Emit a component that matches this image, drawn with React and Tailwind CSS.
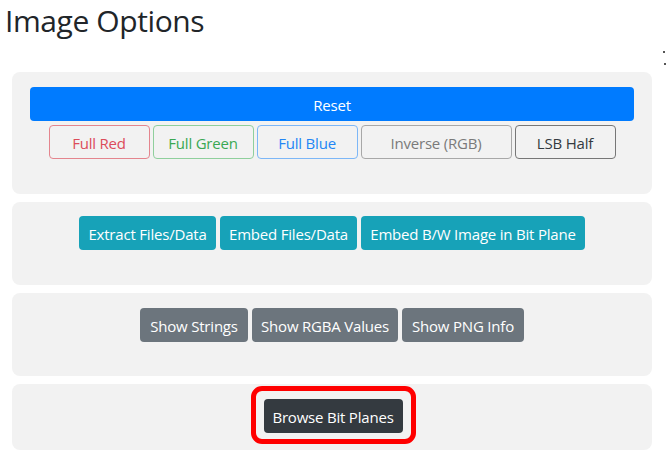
import React from "react";

function Btn({ className = "", children }) {
  return (
    <button
      className={`h-[34px] rounded-[4px] text-[15px] leading-none pt-[3px] flex items-center justify-center ${className}`}
    >
      {children}
    </button>
  );
}

function Panel({ children, className = "" }) {
  return (
    <div className={`bg-[#f2f2f2] rounded-[8px] px-[18px] ${className}`}>{children}</div>
  );
}

export default function App() {
  return (
    <div className="relative w-[666px] h-[458px] bg-white overflow-hidden text-[#212529] font-['Open_Sans'] tracking-[-0.2px]">
      <h2 className="pl-[5px] pt-[1px] text-[30px] font-medium leading-[40px] tracking-[-0.4px] text-[#212529]">
        Image Options
      </h2>
      <span className="absolute left-[663px] top-[51px] w-[2px] h-[2px] bg-[#555]" />
      <span className="absolute left-[664px] top-[63px] w-[2px] h-[2px] bg-[#555]" />

      <div className="mx-[12px] w-[640px] mt-[31px] flex flex-col gap-[8px]">
        <Panel className="pt-[15px] pb-[35px]">
          <Btn className="w-full bg-[#007bff] text-white">Reset</Btn>
          <div className="mt-[4px] flex justify-center gap-[3px]">
            <Btn className="w-[101px] border border-[#e4858e] text-[#dc4c5a]">Full Red</Btn>
            <Btn className="w-[101px] border border-[#8fcf9c] text-[#3aa852]">Full Green</Btn>
            <Btn className="w-[101px] border border-[#7db7f7] text-[#2386f5]">Full Blue</Btn>
            <Btn className="w-[151px] border border-[#a8a8a8] text-[#7a7a7a]">Inverse (RGB)</Btn>
            <Btn className="w-[101px] border border-[#777] text-[#343a40]">LSB Half</Btn>
          </div>
        </Panel>

        <Panel className="pt-[14px] pb-[34px] h-[83px]">
          <div className="flex justify-center gap-[4px]">
            <Btn className="w-[137px] bg-[#17a2b8] text-white">Extract Files/Data</Btn>
            <Btn className="w-[137px] bg-[#17a2b8] text-white">Embed Files/Data</Btn>
            <Btn className="w-[224px] bg-[#17a2b8] text-white">Embed B/W Image in Bit Plane</Btn>
          </div>
        </Panel>

        <Panel className="pt-[15px] h-[83px]">
          <div className="flex justify-center gap-[4px]">
            <Btn className="w-[108px] bg-[#6c757d] text-white">Show Strings</Btn>
            <Btn className="w-[146px] bg-[#6c757d] text-white">Show RGBA Values</Btn>
            <Btn className="w-[122px] bg-[#6c757d] text-white">Show PNG Info</Btn>
          </div>
        </Panel>

        <Panel className="pt-[2px] h-[66px]">
          <div className="flex justify-center">
            <div className="ml-[2px] rounded-[11px] border-[5px] border-[#ff0000] p-[8px] pb-[6px] bg-[#f2f2f2]">
              <Btn className="w-[139px] bg-[#343a40] text-white">Browse Bit Planes</Btn>
            </div>
          </div>
        </Panel>
      </div>
    </div>
  );
}
